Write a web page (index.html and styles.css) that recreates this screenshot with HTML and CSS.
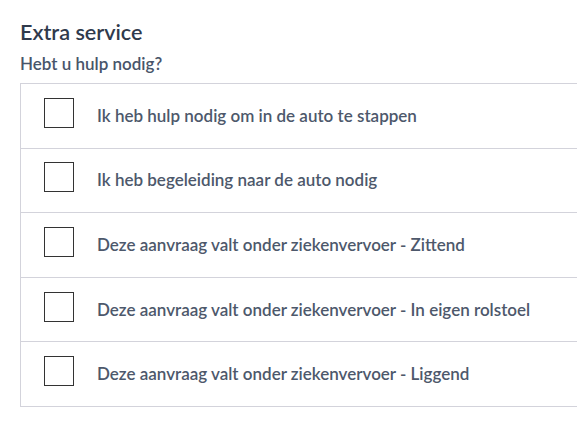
FILE: index.html
```html
<!DOCTYPE html>
<html lang="nl">
<head>
<meta charset="utf-8">
<link rel="stylesheet" href="styles.css">
</head>
<body>
<main class="page">
  <h2 class="title">Extra service</h2>
  <p class="question">Hebt u hulp nodig?</p>
  <ul class="options">
    <li class="option"><label class="option-label"><span class="box"></span><span class="text">Ik heb hulp nodig om in de auto te stappen</span></label></li>
    <li class="option"><label class="option-label"><span class="box"></span><span class="text">Ik heb begeleiding naar de auto nodig</span></label></li>
    <li class="option"><label class="option-label"><span class="box"></span><span class="text">Deze aanvraag valt onder ziekenvervoer - Zittend</span></label></li>
    <li class="option"><label class="option-label"><span class="box"></span><span class="text">Deze aanvraag valt onder ziekenvervoer - In eigen rolstoel</span></label></li>
    <li class="option"><label class="option-label"><span class="box"></span><span class="text">Deze aanvraag valt onder ziekenvervoer - Liggend</span></label></li>
  </ul>
</main>
</body>
</html>
```
FILE: styles.css
```css
html, body {
  margin: 0;
  padding: 0;
  background: #ffffff;
  overflow: hidden;
}
body {
  font-family: "Lato", "Open Sans", sans-serif;
}
.page {
  padding: 19px 0 0 20px;
}
.title {
  margin: 0;
  font-size: 21.6px;
  line-height: 26px;
  font-weight: 600;
  color: #2f3a4c;
}
.question {
  margin: 8px 0 9px 0;
  font-size: 17px;
  line-height: 21px;
  font-weight: 600;
  color: #48556a;
}
.options {
  list-style: none;
  margin: 0 -20px 0 0;
  padding: 0;
  border: 1px solid #d3d3db;
  border-right: none;
}
.option {
  border-bottom: 1px solid #d3d3db;
}
.option:last-child {
  border-bottom: none;
}
.option-label {
  display: flex;
  align-items: center;
  height: 63.6px;
  padding-left: 23px;
  gap: 23px;
}
.box {
  flex: none;
  width: 30px;
  height: 30px;
  box-sizing: border-box;
  border: 1px solid #333333;
  background: #fff;
  position: relative;
  top: -3px;
}
.text {
  font-size: 17px;
  line-height: 20px;
  font-weight: 600;
  color: #4d586b;
  white-space: nowrap;
}
```
